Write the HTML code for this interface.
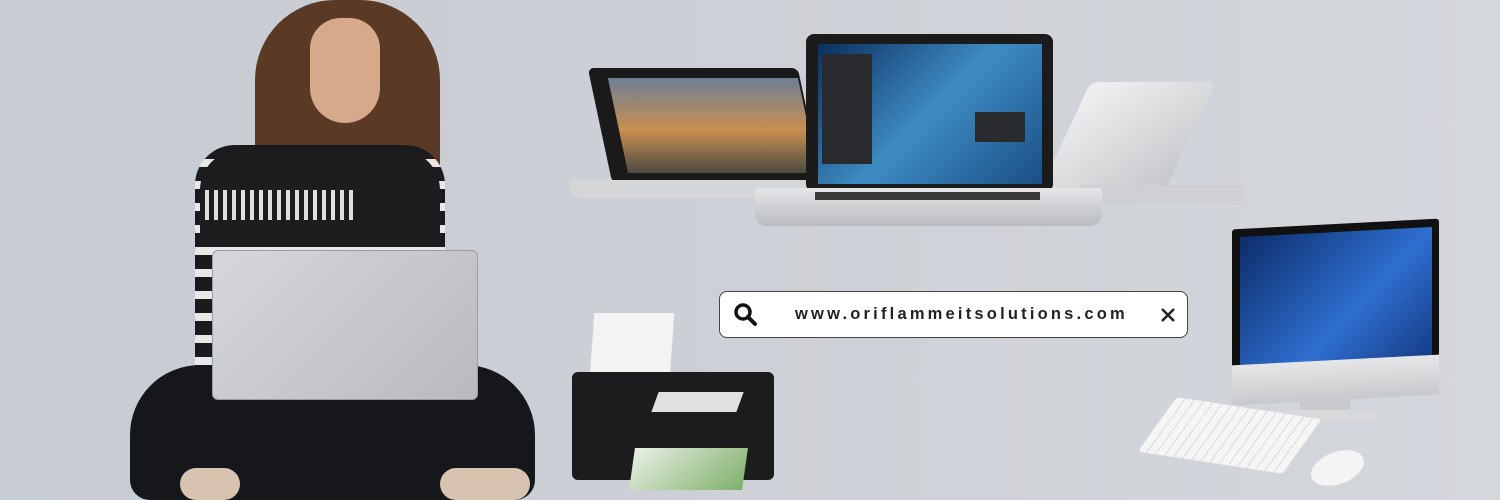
<!DOCTYPE html>
<html><head><style>
*{margin:0;padding:0;box-sizing:border-box}
body{width:1500px;height:500px;overflow:hidden;background:linear-gradient(90deg,#c7cbd2 0%,#cdd0d6 50%,#d4d7dc 100%);position:relative;font-family:"Liberation Sans",sans-serif}
.a{position:absolute}
</style></head><body>
<!-- woman -->
<div class="a" style="left:255px;top:0;width:185px;height:255px;background:#5a3a24;border-radius:80px 80px 40px 40px"></div>
<div class="a" style="left:310px;top:18px;width:70px;height:105px;background:#d6a98a;border-radius:35px 35px 40px 40px"></div>
<div class="a" style="left:195px;top:145px;width:250px;height:235px;background:repeating-linear-gradient(180deg,#1b1b1d 0 14px,#e8e8e8 14px 22px);border-radius:40px 40px 10px 10px"></div>
<div class="a" style="left:200px;top:150px;width:240px;height:95px;background:#1d1d20;border-radius:40px 40px 0 0"></div>
<div class="a" style="left:205px;top:190px;width:150px;height:30px;background:repeating-linear-gradient(90deg,#e0e0e0 0 4px,#1d1d20 4px 9px)"></div>
<div class="a" style="left:130px;top:365px;width:405px;height:135px;background:#16171b;border-radius:70px 70px 20px 20px"></div>
<div class="a" style="left:180px;top:468px;width:60px;height:32px;background:#d8c3b0;border-radius:20px"></div>
<div class="a" style="left:440px;top:468px;width:90px;height:32px;background:#d8c3b0;border-radius:20px"></div>
<div class="a" style="left:212px;top:250px;width:266px;height:150px;background:linear-gradient(135deg,#d6d7da,#b8babe);border-radius:6px;border:1px solid #9a9ca0"></div>
<!-- left laptop -->
<div class="a" style="left:600px;top:68px;width:210px;height:115px;background:#1a1a1a;transform:skewX(12deg);border-radius:6px"></div>
<div class="a" style="left:618px;top:78px;width:190px;height:95px;background:linear-gradient(180deg,#6d7f95,#c98f4f 55%,#4b4a43);transform:skewX(12deg)"></div>
<div class="a" style="left:570px;top:180px;width:240px;height:18px;background:#d5d6d8;border-radius:3px 3px 8px 8px"></div>
<!-- right laptop -->
<div class="a" style="left:1065px;top:82px;width:125px;height:110px;background:linear-gradient(135deg,#f1f1f2,#c5c7ca);transform:skewX(-25deg);border-radius:8px"></div>
<div class="a" style="left:1080px;top:185px;width:165px;height:20px;background:#cfd0d3;border-radius:3px 3px 8px 8px"></div>
<!-- center laptop -->
<div class="a" style="left:806px;top:34px;width:247px;height:158px;background:#1b1b1b;border-radius:8px"></div>
<div class="a" style="left:818px;top:44px;width:224px;height:140px;background:linear-gradient(135deg,#0b2f5e,#3e8cc4 50%,#1b4f86)"></div>
<div class="a" style="left:822px;top:54px;width:50px;height:110px;background:#2a2b2e"></div>
<div class="a" style="left:975px;top:112px;width:50px;height:30px;background:#2a2b2e"></div>
<div class="a" style="left:755px;top:188px;width:347px;height:38px;background:linear-gradient(180deg,#e4e5e7,#b9bbbe);border-radius:3px 3px 12px 12px"></div>
<div class="a" style="left:815px;top:192px;width:225px;height:8px;background:#3a3a3c"></div>
<!-- search -->
<div class="a" style="left:719px;top:291px;width:469px;height:47px;background:#fff;border:1.5px solid #444;border-radius:8px"></div>
<svg class="a" style="left:732px;top:302px" width="28" height="26" viewBox="0 0 28 26"><circle cx="11" cy="10" r="7" fill="none" stroke="#111" stroke-width="3.5"/><line x1="16" y1="15" x2="23" y2="22" stroke="#111" stroke-width="4" stroke-linecap="round"/></svg>
<div class="a" style="left:795px;top:305px;font-size:16.5px;font-weight:bold;letter-spacing:3.2px;color:#222">www.oriflammeitsolutions.com</div>
<svg class="a" style="left:1160px;top:307px" width="16" height="16"><path d="M2 2L14 14M14 2L2 14" stroke="#222" stroke-width="2.5"/></svg>
<!-- printer -->
<div class="a" style="left:592px;top:313px;width:80px;height:65px;background:#f3f3f3;transform:skewX(-4deg)"></div>
<div class="a" style="left:572px;top:372px;width:202px;height:108px;background:#1c1c1e;border-radius:6px"></div>
<div class="a" style="left:655px;top:392px;width:85px;height:20px;background:#e0e0e0;transform:skewX(-20deg)"></div>
<div class="a" style="left:632px;top:448px;width:113px;height:42px;background:linear-gradient(135deg,#e8efe4,#7fb06a);transform:skewX(-8deg)"></div>
<!-- monitor -->
<div class="a" style="left:1232px;top:224px;width:207px;height:150px;background:#111;transform:skewY(-3deg);border-radius:3px"></div>
<div class="a" style="left:1240px;top:232px;width:192px;height:130px;background:linear-gradient(135deg,#0d2d6a,#2f6fd0 60%,#163c86);transform:skewY(-3deg)"></div>
<div class="a" style="left:1232px;top:360px;width:207px;height:40px;background:linear-gradient(180deg,#e6e6e8,#c8c9cc);transform:skewY(-3deg)"></div>
<div class="a" style="left:1300px;top:395px;width:50px;height:20px;background:#c9cacd"></div>
<div class="a" style="left:1272px;top:410px;width:105px;height:12px;background:#d8d9db;border-radius:3px"></div>
<div class="a" style="left:1150px;top:408px;width:160px;height:55px;background:repeating-linear-gradient(90deg,#f5f5f6 0 9px,#d4d5d8 9px 10px);transform:skewX(-30deg) rotate(8deg);border-radius:4px"></div>
<div class="a" style="left:1310px;top:452px;width:55px;height:32px;background:#f4f4f5;border-radius:50%;transform:rotate(-20deg)"></div>
</body></html>
